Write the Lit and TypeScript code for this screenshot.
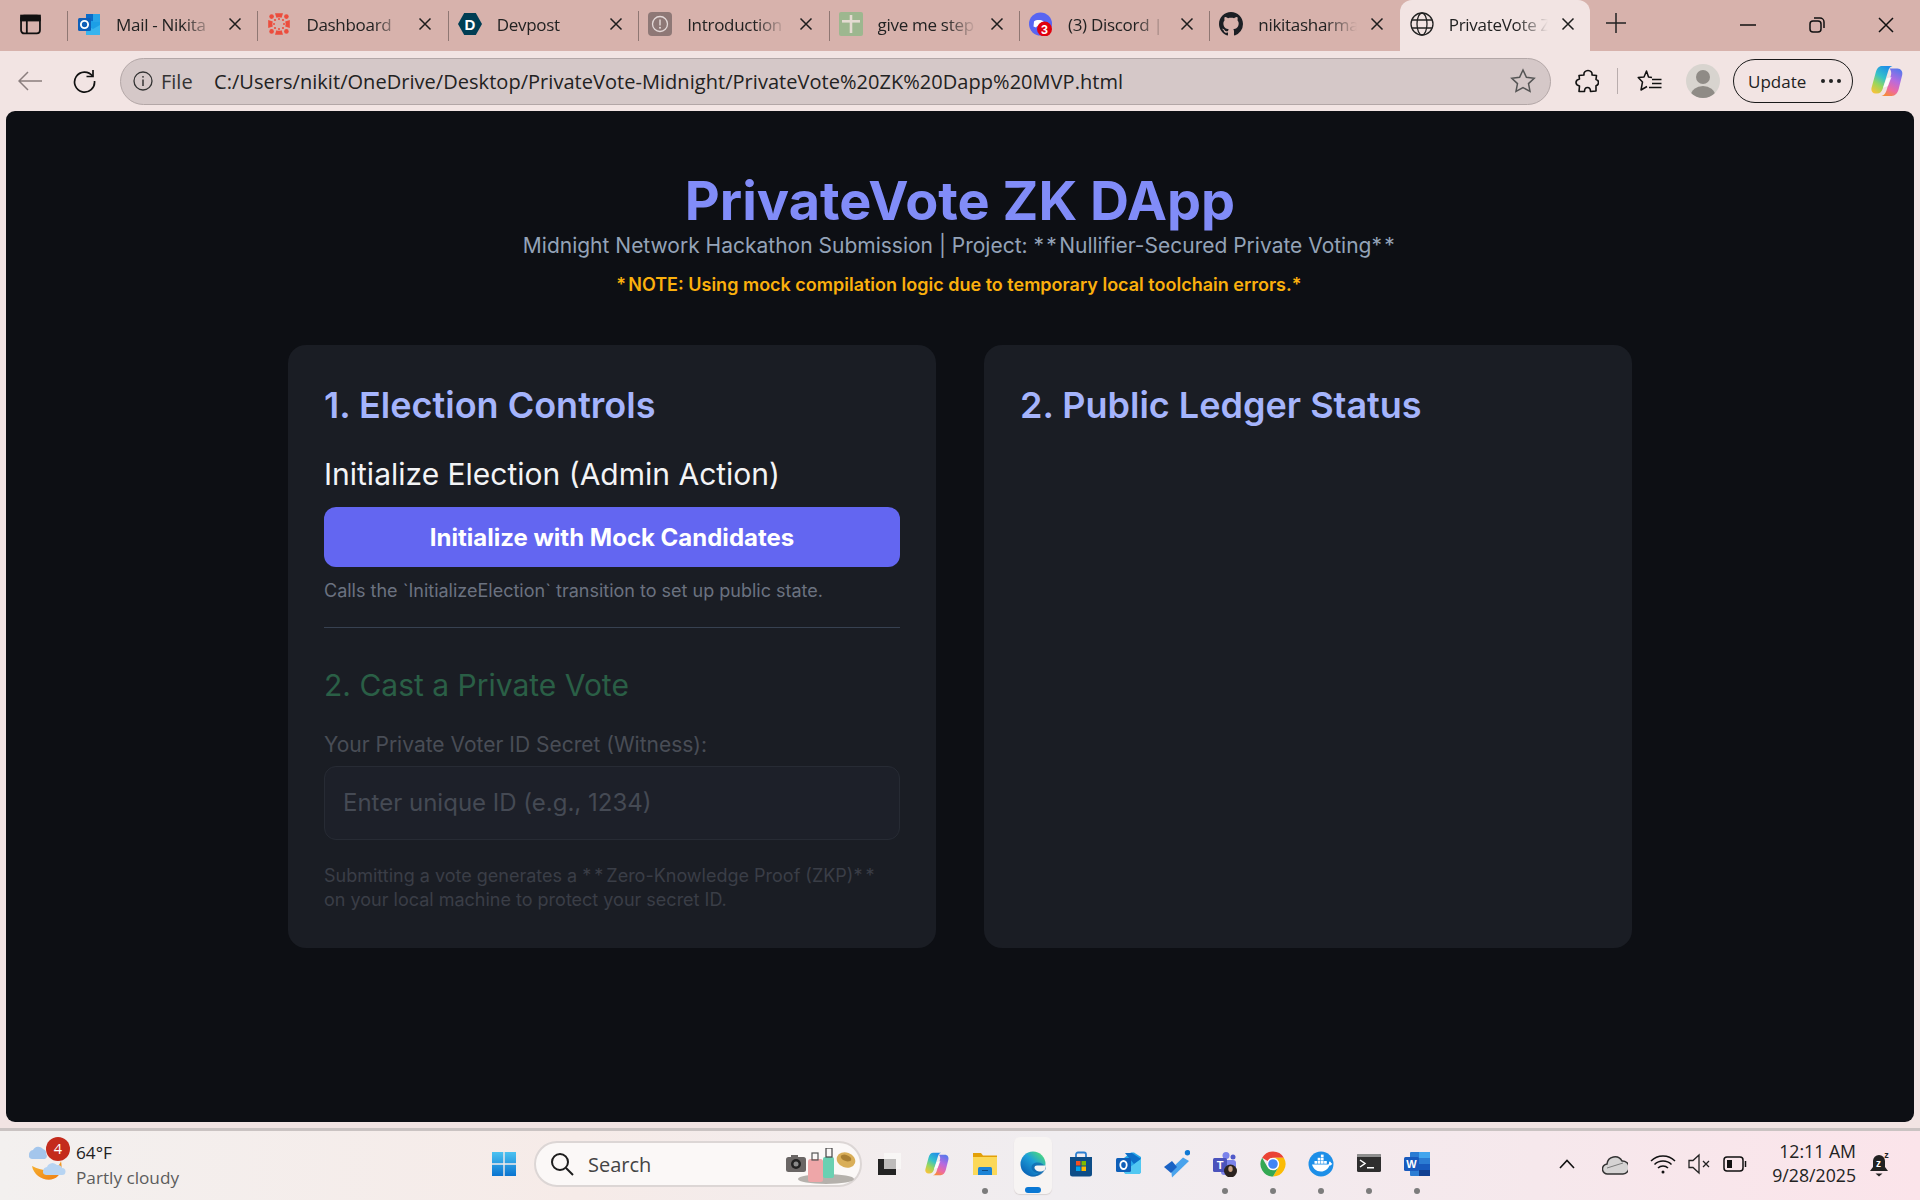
import { LitElement, html, css, svg } from "lit";
import { customElement } from "lit/decorators.js";

const ic = {
  outlook: svg`<svg viewBox="0 0 24 24" width="24" height="24"><rect x="9" y="2" width="14" height="8" fill="#0a6cc9"/><rect x="9" y="9" width="14" height="13" fill="#1c9fe6"/><path d="M9 13l7 4 7-4v10H9z" fill="#37b4ee"/><rect x="16" y="2" width="7" height="8" fill="#27a4e8"/><rect x="1" y="6" width="13" height="13" rx="1.5" fill="#0f5fb8"/><circle cx="7.5" cy="12.5" r="3.6" fill="none" stroke="#fff" stroke-width="1.9"/></svg>`,
  canvas: svg`<svg viewBox="0 0 24 24" width="24" height="24"><g fill="#ec4d3d"><path d="M8 1.2h8l-1.4 4.6a7 7 0 0 0-5.2 0z"/><path d="M8 22.8h8l-1.4-4.6a7 7 0 0 1-5.2 0z"/><path d="M1.2 8v8l4.6-1.4a7 7 0 0 1 0-5.2z"/><path d="M22.8 8v8l-4.6-1.4a7 7 0 0 0 0-5.2z"/><circle cx="4.6" cy="4.6" r="2.3"/><circle cx="19.4" cy="4.6" r="2.3"/><circle cx="4.6" cy="19.4" r="2.3"/><circle cx="19.4" cy="19.4" r="2.3"/><circle cx="8" cy="8" r="1.1"/><circle cx="16" cy="8" r="1.1"/><circle cx="8" cy="16" r="1.1"/><circle cx="16" cy="16" r="1.1"/><circle cx="12" cy="7" r="1"/><circle cx="12" cy="17" r="1"/><circle cx="7" cy="12" r="1"/><circle cx="17" cy="12" r="1"/></g></svg>`,
  devpost: svg`<svg viewBox="0 0 24 24" width="24" height="24"><path d="M6.2 1h11.6L24 12l-6.2 11H6.2L0 12z" fill="#003e54"/><text x="12" y="17.5" text-anchor="middle" font-family="Liberation Sans" font-weight="700" font-size="15" fill="#fff">D</text></svg>`,
  intro: svg`<svg viewBox="0 0 24 24" width="24" height="24"><rect width="24" height="24" rx="4" fill="#8e7876"/><circle cx="12" cy="12" r="7.5" fill="none" stroke="#e4d9d8" stroke-width="1.3"/><rect x="11.3" y="7.5" width="1.4" height="6" fill="#e4d9d8"/><circle cx="12" cy="15.7" r="1" fill="#e4d9d8"/></svg>`,
  sheet: svg`<svg viewBox="0 0 24 24" width="24" height="24"><rect width="24" height="24" rx="2" fill="#9db78f"/><rect x="10.7" y="3" width="2.6" height="18" fill="#e5dbd2"/><rect x="3" y="8" width="18" height="2.6" fill="#e5dbd2"/></svg>`,
  discord: svg`<svg viewBox="0 0 24 24" width="24" height="24"><circle cx="11.5" cy="12" r="11.5" fill="#5865f2"/><path d="M5 9.5c2-1.7 7-2 9.5 0 1 1.6 1.5 3.4 1.5 5l-2.500 1-1-1.300h-4.500l-1 1.300-2.500-1c0-1.600.5-3.400.5-5z" fill="#fff"/><circle cx="15.500" cy="17" r="7.500" fill="#e0000f"/><text x="15.500" y="21.500" text-anchor="middle" font-family="Liberation Sans" font-weight="700" font-size="12.500" fill="#fff">3</text></svg>`,
  github: svg`<svg viewBox="0 0 16 16" width="24" height="24"><path fill="#1b1f24" d="M8 0C3.580 0 0 3.580 0 8c0 3.540 2.290 6.530 5.470 7.590.4.070.55-.17.55-.38 0-.19-.01-.82-.01-1.490-2.010.37-2.530-.49-2.690-.94-.09-.23-.48-.94-.82-1.130-.28-.15-.68-.52-.01-.53.63-.01 1.080.58 1.230.82.72 1.210 1.870.87 2.330.66.070-.52.28-.87.51-1.070-1.780-.2-3.640-.89-3.640-3.950 0-.87.31-1.590.82-2.150-.08-.2-.36-1.020.08-2.120 0 0 .67-.21 2.200.82.64-.18 1.320-.27 2-.27s1.360.09 2 .27c1.530-1.040 2.200-.82 2.200-.82.44 1.100.16 1.920.08 2.120.51.56.82 1.270.82 2.150 0 3.070-1.870 3.750-3.650 3.950.29.25.54.73.54 1.480 0 1.070-.01 1.930-.01 2.200 0 .21.15.46.55.38A8.013 8.013 0 0 0 16 8c0-4.420-3.580-8-8-8z"/></svg>`,
  globe: svg`<svg viewBox="0 0 24 24" width="24" height="24" fill="none" stroke="#222" stroke-width="1.300"><circle cx="12" cy="12" r="11"/><ellipse cx="12" cy="12" rx="5" ry="11"/><path d="M1.800 8h20.400M1.800 16h20.400"/></svg>`,
};

const tabs = [
  { t: "Mail - Nikita", i: ic.outlook },
  { t: "Dashboard", i: ic.canvas },
  { t: "Devpost", i: ic.devpost },
  { t: "Introduction", i: ic.intro },
  { t: "give me step", i: ic.sheet },
  { t: "(3) Discord |", i: ic.discord },
  { t: "nikitasharma", i: ic.github },
];

const close = svg`<svg class="x" viewBox="0 0 14 14" width="14" height="14"><path d="M1.500 1.500l11 11M12.500 1.500l-11 11" stroke="#1d1d1d" stroke-width="1.500" fill="none"/></svg>`;

const copilot = (w: number, h: number) => svg`<svg class="copi" viewBox="0 0 32 32" width=${w} height=${h}><defs>
  <linearGradient id="cpa" x1=".7" y1="0" x2=".2" y2="1"><stop offset="0" stop-color="#1f8fe8"/><stop offset=".4" stop-color="#35c2c9"/><stop offset=".7" stop-color="#9bd65a"/><stop offset="1" stop-color="#f6c33a"/></linearGradient>
  <linearGradient id="cpb" x1=".7" y1="0" x2=".3" y2="1"><stop offset="0" stop-color="#5a78ec"/><stop offset=".4" stop-color="#b56be0"/><stop offset=".75" stop-color="#ee6aa0"/><stop offset="1" stop-color="#f58a3c"/></linearGradient></defs>
  <path d="M11 1h10.500c-2.500.5-3.500 2.500-4.300 5l-5.400 17.500c-.9 3-2.800 5-5.800 5H4.500c-3 0-4.800-2.500-3.900-6l4-14.500C5.700 3.500 8 1 11 1z" fill="url(#cpa)"/>
  <path d="M21 3.500h5.500c3.500 0 5.500 3 4.700 6.500l-3.500 14c-1 4-3.500 7-7 7H10.500c2.700-.8 4.200-3 5-5.500L20 10c.6-2.500 0-5-1.500-6.500z" fill="url(#cpb)"/>
  <path d="M15.500 13.500l5-1.500-3.500 9-5 1.800z" fill="#fff" opacity=".85"/></svg>`;

const apps = [
  copilot(24, 24),
  svg`<svg viewBox="0 0 24 22" width="24" height="22"><path d="M0 0h8l2 2.500h14V22H0z" fill="#e3a008"/><rect x="0" y="4" width="24" height="18" fill="#fbd858"/><path d="M5 15.500a1.500 1.500 0 0 1 1.500-1.500h11a1.500 1.500 0 0 1 1.500 1.500V22H5z" fill="#1b83d6"/><rect x="9" y="17" width="6" height="1" fill="#0d4d87"/></svg>`,
  svg`<svg viewBox="0 0 26 26" width="26" height="26"><defs><linearGradient id="ed" x1=".9" y1=".1" x2=".2" y2=".9"><stop offset="0" stop-color="#4fdb7a"/><stop offset=".45" stop-color="#1ea0d8"/><stop offset="1" stop-color="#0b66b8"/></linearGradient></defs><circle cx="13" cy="13" r="12.500" fill="url(#ed)"/><path d="M25 18.500C23 23 18.500 25.500 13 25.500c-2 0-3-.3-4-1 3 .5 8.500-.5 9.500-2.500-3 0-7-2-7-5.500s3-5 6-5c3.500 0 6.500 2 8 4.500l.3 2.500z" fill="#0e5fa8" opacity=".65"/><path d="M25.500 14.500H17c-1.600 0-2.500.9-2.500 2 0 2.500 3 4 5.500 4 2 0 3.500-.5 5-2z" fill="#f7f4f3"/></svg>`,
  svg`<svg viewBox="0 0 26 26" width="26" height="26"><path d="M8 6V3.500a2 2 0 0 1 2-2h6a2 2 0 0 1 2 2V6" fill="none" stroke="#2c7fd0" stroke-width="1.800"/><path d="M2 6h22v17a2.500 2.500 0 0 1-2.500 2.500h-17A2.500 2.500 0 0 1 2 23z" fill="#0d4d87"/><rect x="8" y="10" width="4.500" height="4.500" fill="#f25022"/><rect x="13.500" y="10" width="4.500" height="4.500" fill="#7fba00"/><rect x="8" y="15.500" width="4.500" height="4.500" fill="#00a4ef"/><rect x="13.500" y="15.500" width="4.500" height="4.500" fill="#ffb900"/></svg>`,
  svg`<svg viewBox="0 0 26 24" width="26" height="24"><path d="M8 6l7-5.500h3L25 5v14a3 3 0 0 1-3 3H11a3 3 0 0 1-3-3z" fill="#27a9ea"/><path d="M9 1h7l9 6-7 5z" fill="#0c6fc8"/><path d="M8 19l9-6 8-6v12a3 3 0 0 1-3 3H11a3 3 0 0 1-3-3z" fill="#52c8f2"/><rect x="0" y="6" width="15" height="14" rx="1.500" fill="#0f5fb8"/><ellipse cx="7.500" cy="13" rx="3.200" ry="4" fill="none" stroke="#fff" stroke-width="1.800"/></svg>`,
  svg`<svg viewBox="0 0 26 28" width="26" height="28"><circle cx="23.500" cy="2.700" r="2.700" fill="#0f78d4"/><path d="M8 27.500L25 11l-6-3.500L7 19z" fill="#4aa3ec"/><path d="M0 17l8-6 5 6-6 6z" fill="#1a62c4"/></svg>`,
  svg`<svg viewBox="0 0 26 26" width="26" height="26"><circle cx="14" cy="4.500" r="3.500" fill="#7b83eb"/><circle cx="21" cy="6" r="2.500" fill="#5059c9"/><rect x="9" y="9" width="15" height="15" rx="3" fill="#7b83eb"/><rect x="1" y="7" width="14" height="14" rx="1.500" fill="#4b53bc"/><text x="8" y="18" text-anchor="middle" font-family="Liberation Sans" font-weight="700" font-size="11" fill="#fff">T</text><circle cx="18.500" cy="20" r="6.500" fill="#2b2320"/><ellipse cx="18.500" cy="18" rx="2.200" ry="3" fill="#c9a184"/></svg>`,
  svg`<svg viewBox="0 0 26 26" width="26" height="26"><path d="M2.170 6.750A12.500 12.500 0 0 1 23.830 6.750H13A6.250 6.250 0 0 0 7.590 9.875z" fill="#ea4335"/><path d="M23.830 6.750A12.500 12.500 0 0 1 13 25.500L18.410 16.125A6.250 6.250 0 0 0 13 6.750z" fill="#fbbc05"/><path d="M13 25.500A12.500 12.500 0 0 1 2.170 6.750L7.590 16.125A6.250 6.250 0 0 0 18.410 16.125z" fill="#34a853"/><circle cx="13" cy="13" r="6" fill="#fff"/><circle cx="13" cy="13" r="4.800" fill="#4285f4"/></svg>`,
  svg`<svg viewBox="0 0 26 26" width="26" height="26"><circle cx="13" cy="13" r="12.500" fill="#1d8fe8"/><path d="M4 13.500h15.500c.8 0 1.500-.5 1.500-1.500 0-1 .3-1.500 1-1.500.6.500 1 1 1.200 1.700.5 0 1 .2 1 .3-.5 1.500-1.500 2-2.700 2-1.500 3.500-4.500 6-8.500 6-5 0-7.700-3-9-7z" fill="#fff"/><g fill="#fff"><rect x="6.500" y="10" width="2.700" height="2.700"/><rect x="9.700" y="10" width="2.700" height="2.700"/><rect x="12.900" y="10" width="2.700" height="2.700"/><rect x="16.100" y="10" width="2.700" height="2.700"/><rect x="9.700" y="6.800" width="2.700" height="2.700"/><rect x="12.900" y="6.800" width="2.700" height="2.700"/><rect x="12.900" y="3.600" width="2.700" height="2.700"/></g></svg>`,
  svg`<svg viewBox="0 0 24 20" width="24" height="20"><rect x="0" y="0" width="24" height="18" rx="1.500" fill="#2e2e2e"/><path d="M1.500 0h21A1.500 1.500 0 0 1 24 1.500V3H0V1.500A1.500 1.500 0 0 1 1.500 0z" fill="#8f8f8f"/><path d="M3 6l5 3.500L3 13" fill="none" stroke="#fff" stroke-width="1.500"/><rect x="10" y="13" width="7" height="1.500" fill="#fff"/></svg>`,
  svg`<svg viewBox="0 0 26 24" width="26" height="24"><rect x="6" y="0" width="20" height="24" rx="1" fill="#2b7cd3"/><rect x="15" y="0" width="11" height="6" fill="#41a5ee"/><rect x="15" y="12" width="11" height="6" fill="#185abd"/><rect x="15" y="18" width="11" height="6" fill="#103f91"/><rect x="0" y="5" width="15" height="14" rx="1.500" fill="#185abd"/><text x="7.500" y="16" text-anchor="middle" font-family="Liberation Sans" font-weight="700" font-size="11" fill="#fff">W</text></svg>`,
];
const dots = [false, true, false, false, false, false, true, true, true, true, true];

@customElement("app-root")
export class AppRoot extends LitElement {
  static styles = css`
    :host { display: block; width: 1920px; height: 1200px; overflow: hidden; font-family: "Open Sans", "Noto Sans", sans-serif; background: #f2e4e3; }
    .root { display: flex; flex-direction: column; height: 1200px; }
    .tabbar { display: flex; height: 51px; background: #d7b2ac; align-items: stretch; flex: none; }
    .side { width: 67px; display: flex; align-items: center; padding: 0 0 3px 20px; box-sizing: border-box; }
    .tab { width: 190.4px; box-sizing: border-box; display: flex; align-items: center; padding: 0 0 3px 10px; position: relative; font-size: 17px; color: #222; }
    .tab::before { content: ""; position: absolute; left: 0; top: 11px; height: 30px; width: 1px; background: #8f7773; }
    .tab.active { background: #f2e4e3; width: 190px; border-radius: 12px 12px 0 0; }
    .tab.active::before { display: none; }
    .fav { width: 24px; height: 24px; flex: none; display: block; }
    .ttl { width: 102px; margin-left: 15px; white-space: nowrap; letter-spacing: -0.3px; overflow: hidden; flex: none; -webkit-mask-image: linear-gradient(to right, #000 66%, transparent 97%); mask-image: linear-gradient(to right, #000 66%, transparent 97%); }
    .x { margin-left: 10px; flex: none; }
    .plus { margin: 0 0 5px 15px; align-self: center; display: block; }
    .win { margin-left: auto; display: flex; align-items: center; padding-bottom: 1px; }
    .wc { width: 69px; display: flex; justify-content: center; }
    .toolbar { height: 60px; flex: none; display: flex; align-items: center; background: #f2e4e3; }
    .tb-back { width: 60px; display: flex; justify-content: center; }
    .tb-reload { width: 60px; display: flex; justify-content: center; margin-left: -6px; }
    .addr { width: 1431px; height: 47px; box-sizing: border-box; margin-left: 6px; border: 1.500px solid #b3a7a7; border-radius: 24px; background: #d5c8c8; display: flex; align-items: center; padding-left: 12px; font-size: 20px; color: #222; }
    .file { margin-left: 8px; width: 51px; color: #333; }
    .url { margin-left: 2px; flex: 1; white-space: nowrap; letter-spacing: 0.04px; }
    .star { margin-right: 14px; display: block; }
    .tools { display: flex; align-items: center; margin-left: 6px; }
    .tcell { width: 60px; display: flex; justify-content: center; }
    .tcell.fv { padding-left: 4px; width: 56px; }
    .sep { width: 1px; height: 26px; background: #b9adad; }
    .avatar { width: 34px; height: 34px; border-radius: 50%; background: #d8d4cf; overflow: hidden; display: block; margin: 0 13px 0 8px; }
    .update { width: 120px; height: 44px; box-sizing: border-box; border: 1.500px solid #1a1a1a; border-radius: 22px; display: flex; align-items: center; padding-left: 14px; font-size: 17px; color: #222; gap: 15px; }
    .more { display: flex; gap: 4px; }
    .more i { width: 4px; height: 4px; border-radius: 50%; background: #222; display: block; }
    .cop { margin-left: 18px; display: flex; }

    .page { flex: none; height: 1011px; margin: 0 6px; background: #0d0f14; border-radius: 9px; box-sizing: border-box; padding-top: 59px; display: flex; flex-direction: column; align-items: center; font-family: Inter, sans-serif; }
    h1 { margin: 0; font-size: 54px; line-height: 61px; font-weight: 700; color: #818cf8; }
    .sub { font-size: 21px; line-height: 30px; color: #94a3b8; }
    .ast { letter-spacing: 2.300px; }
    .note { margin-top: 12px; font-size: 18px; line-height: 24px; font-weight: 600; color: #fbb00d; }
    .cards { margin-top: 48px; display: grid; grid-template-columns: 648px 648px; gap: 48px; }
    .card { background: #1a1d24; border-radius: 18px; padding: 36px; height: 531px; box-sizing: content-box; }
    h2 { margin: 0; font-size: 36px; line-height: 48px; font-weight: 600; color: #a5b4fc; }
    h3 { margin: 27px 0 0; font-size: 30px; line-height: 36px; font-weight: 400; color: #f3f4f6; }
    button { display: block; width: 100%; height: 60px; margin-top: 15px; border: 0; border-radius: 12px; background: #6366f1; color: #fff; font: 700 24px Inter, sans-serif; }
    .help { margin-top: 12px; font-size: 18px; line-height: 24px; color: #6b7280; }
    hr { margin: 24px 0 0; border: 0; height: 1px; background: #374151; }
    h3.cast { margin-top: 39px; color: #2a5f46; }
    label { display: block; margin-top: 29px; font-size: 21px; line-height: 26px; color: #494d56; }
    input { display: block; width: 100%; height: 74px; box-sizing: border-box; margin-top: 8px; border: 1px solid #272b34; border-radius: 12px; background: #1d2029; padding: 0 18px 2px; font: 400 24px Inter, sans-serif; color: #454a54; }
    input::placeholder { color: #454a54; opacity: 1; }
    .priv { margin-top: 24px; font-size: 18px; line-height: 24px; color: #3a3e47; }
    .priv .ast { letter-spacing: 3px; }

    .taskbar { flex: none; margin-top: 6px; height: 72px; box-sizing: border-box; border-top: 3px solid #cac3c2; display: flex; align-items: center; background: linear-gradient(90deg, #f3f0ef 0%, #f6ebe8 30%, #f0edf0 55%, #f6e8ec 80%, #fbe4ea 100%); color: #222; font-family: "Open Sans", "Noto Sans", sans-serif; }
    .weather { width: 480px; flex: none; box-sizing: border-box; padding-left: 28px; display: flex; align-items: center; }
    .wicon { position: relative; width: 48px; height: 52px; flex: none; }
    .wicon svg { display: block; }
    .badge { position: absolute; left: 18px; top: -3px; width: 24px; height: 24px; border-radius: 50%; background: #c42b1c; color: #fff; font-size: 14.500px; line-height: 24px; text-align: center; }
    .wtext { font-size: 17.200px; line-height: 25px; margin-top: -2px; }
    .wtext div:last-child { color: #5c5c5c; }
    .cell { width: 48px; height: 57px; flex: none; display: flex; align-items: center; justify-content: center; position: relative; padding-bottom: 3px; box-sizing: border-box; }
    .cell.on { background: #f7f4f3; border-radius: 6px; box-shadow: 0 1px 1px #d8d2d2; width: 38px; margin: 0 5px; }
    .dot { position: absolute; left: 21px; bottom: 0; width: 6px; height: 6px; border-radius: 50%; background: #7c7c7c; }
    .bar { position: absolute; left: 11px; bottom: 1px; width: 16px; height: 6px; border-radius: 3px; background: #0a78d4; }
    .search { width: 328px; height: 46px; box-sizing: border-box; flex: none; margin: 0 3px 3px 6px; border-radius: 23px; border: 2px solid #dcd6d5; background: #fbf8f7; display: flex; align-items: center; padding-left: 14px; font-size: 20px; color: #444; position: relative; }
    .search span { margin-left: 14px; }
    .deco { position: absolute; right: 4px; top: 5px; display: block; }
    .tray { margin-left: 108px; display: flex; align-items: center; padding-bottom: 3px; }
    .tc { width: 36px; display: flex; justify-content: center; }
    .tc.wide { width: 60px; }
    .clock { width: 103px; text-align: right; font-size: 17.700px; line-height: 24.500px; color: #222; padding-bottom: 2px; }
    .bell { margin-left: 12px; display: block; }
  `;

  render() {
    const ast = html`<span class="ast">**</span>`;
    return html`<div class="root">
      <div class="tabbar">
        <div class="side"><svg viewBox="0 0 20 20" width="21" height="21" fill="none" stroke="#111" stroke-width="1.700"><rect x="1" y="1.500" width="18" height="17" rx="3"/><path d="M1 6h18M6.500 6v12" /><rect x="1" y="1.500" width="18" height="4.500" fill="#111"/></svg></div>
        ${tabs.map((t) => html`<div class="tab"><div class="fav">${t.i}</div><div class="ttl">${t.t}</div>${close}</div>`)}
        <div class="tab active"><div class="fav">${ic.globe}</div><div class="ttl">PrivateVote Z</div>${close}</div>
        <svg class="plus" viewBox="0 0 22 22" width="22" height="22"><path d="M11 1v20M1 11h20" stroke="#222" stroke-width="1.500"/></svg>
        <div class="win">
          <div class="wc"><svg viewBox="0 0 16 16" width="16" height="16"><path d="M0 8h16" stroke="#111" stroke-width="1.500"/></svg></div>
          <div class="wc"><svg viewBox="0 0 16 16" width="16" height="16" fill="none" stroke="#111" stroke-width="1.500"><rect x="1" y="4" width="11" height="11" rx="3"/><path d="M5 1h6a4 4 0 0 1 4 4v6"/></svg></div>
          <div class="wc"><svg viewBox="0 0 16 16" width="16" height="16"><path d="M1 1l14 14M15 1L1 15" stroke="#111" stroke-width="1.500"/></svg></div>
        </div>
      </div>
      <div class="toolbar">
        <div class="tb-back"><svg viewBox="0 0 24 20" width="24" height="20" fill="none" stroke="#8a7e7e" stroke-width="1.500"><path d="M24 10H1M10 1l-9 9 9 9"/></svg></div>
        <div class="tb-reload"><svg viewBox="0 0 24 24" width="24" height="24" fill="none" stroke="#111" stroke-width="1.700"><path d="M20.500 7A10 10 0 1 0 22.500 12"/><path d="M21 1v6.500h-6.500"/></svg></div>
        <div class="addr">
          <svg viewBox="0 0 20 20" width="20" height="20" fill="none" stroke="#333" stroke-width="1.300"><circle cx="10" cy="10" r="9"/><path d="M10 8.500V15" stroke-width="1.500"/><circle cx="10" cy="5.800" r=".9" fill="#333" stroke="none"/></svg>
          <span class="file">File</span>
          <span class="url">C:/Users/nikit/OneDrive/Desktop/PrivateVote-Midnight/PrivateVote%20ZK%20Dapp%20MVP.html</span>
          <svg class="star" viewBox="0 0 26 26" width="26" height="26" fill="none" stroke="#555" stroke-width="1.500"><path d="M13 2l3.400 7.200 7.800 1-5.700 5.400 1.500 7.800L13 19.600l-7 3.800 1.500-7.800-5.700-5.400 7.800-1z"/></svg>
        </div>
        <div class="tools">
          <div class="tcell"><svg viewBox="0 0 24 24" width="24" height="24" fill="none" stroke="#111" stroke-width="1.600" stroke-linejoin="round"><path d="M9 6C8.500 3.500 10.500 1.500 13 1.500S17.500 3.500 17 6L21.500 6.500 21 10.500C23 11 23.500 12.500 23.500 13.500 23.500 15.500 22 16.500 21 16.800L21 22 15.500 22.500C15.500 20 14 18.500 12.500 18.500 10.500 18.500 9.500 20 9.500 22.500L4 22.500 4.500 17C2.500 16.500 1 15 1 13.500 1 12 2.500 10.500 4.500 10L4 6.500z"/></svg></div>
          <div class="sep"></div>
          <div class="tcell fv"><svg viewBox="0 0 26 24" width="26" height="24" fill="none" stroke="#111" stroke-width="1.500" stroke-linejoin="round"><path d="M15 8.500L11.500 8 9.500 2 7 8 1.200 8.500 5.500 13 4 21 10 17.500"/><path d="M15 10.500h9.500M15 14.500h9.500M12 18.500h12.500"/></svg></div>
          <svg class="avatar" viewBox="0 0 34 34"><circle cx="17" cy="13" r="7" fill="#8f8b86"/><ellipse cx="17" cy="31" rx="12" ry="9" fill="#8f8b86"/></svg>
          <div class="update"><span>Update</span><span class="more"><i></i><i></i><i></i></span></div>
          <div class="cop">${copilot(32, 32)}</div>
        </div>
      </div>

      <main class="page">
        <h1>PrivateVote ZK DApp</h1>
        <div class="sub">Midnight Network Hackathon Submission | Project: ${ast}Nullifier-Secured Private Voting${ast}</div>
        <div class="note"><span class="ast">*</span>NOTE: Using mock compilation logic due to temporary local toolchain errors.<span class="ast">*</span></div>
        <div class="cards">
          <section class="card">
            <h2>1. Election Controls</h2>
            <h3>Initialize Election (Admin Action)</h3>
            <button>Initialize with Mock Candidates</button>
            <div class="help">Calls the \`InitializeElection\` transition to set up public state.</div>
            <hr />
            <h3 class="cast">2. Cast a Private Vote</h3>
            <label>Your Private Voter ID Secret (Witness):</label>
            <input disabled placeholder="Enter unique ID (e.g., 1234)" />
            <div class="priv">Submitting a vote generates a ${ast}Zero-Knowledge Proof (ZKP)${ast}<br />on your local machine to protect your secret ID.</div>
          </section>
          <section class="card"><h2>2. Public Ledger Status</h2></section>
        </div>
      </main>

      <div class="taskbar">
        <div class="weather">
          <div class="wicon">
            <svg viewBox="0 0 48 52" width="48" height="52"><defs><linearGradient id="mo" x1="0" y1="0" x2="1" y2="1"><stop offset="0" stop-color="#f7b733"/><stop offset="1" stop-color="#ee7d11"/></linearGradient></defs><path d="M4 26C6 38 22 44 30 36 34 32 34 26 33 21 30 30 20 34 4 26z" fill="url(#mo)"/><path d="M1 15a4.500 4.500 0 0 1 4-5 6 6 0 0 1 10-1 4 4 0 0 1 3 5 3 3 0 0 1-1 5H4a3.500 3.500 0 0 1-3-4z" fill="#a4c6ec"/><path d="M15 31a4.500 4.500 0 0 1 4-4 6 6 0 0 1 10-2 4.500 4.500 0 0 1 5 3 3.500 3.500 0 0 1 0 7H18a3.500 3.500 0 0 1-3-4z" fill="#b7d4f2"/></svg>
            <div class="badge">4</div>
          </div>
          <div class="wtext"><div>64°F</div><div>Partly cloudy</div></div>
        </div>
        <div class="cell"><svg viewBox="0 0 24 24" width="24" height="24"><defs><linearGradient id="w" x1="0" y1="0" x2="0" y2="1"><stop offset="0" stop-color="#4cc2f1"/><stop offset="1" stop-color="#0a74d0"/></linearGradient></defs><path d="M0 0h11.300v11.300H0zM12.700 0H24v11.300H12.700zM0 12.700h11.300V24H0zM12.700 12.700H24V24H12.700z" fill="url(#w)"/></svg></div>
        <div class="search">
          <svg viewBox="0 0 24 24" width="24" height="24" fill="none" stroke="#1c1c1c" stroke-width="2"><circle cx="10" cy="10" r="8"/><path d="M16 16l7 7"/></svg>
          <span>Search</span>
          <svg class="deco" viewBox="0 0 70 37" width="70" height="37"><ellipse cx="40" cy="31" rx="28" ry="5" fill="#b5b1ac"/><rect x="0" y="9" width="20" height="15" rx="2.500" fill="#6a6665"/><rect x="5" y="7" width="7" height="3" fill="#6a6665"/><circle cx="10" cy="16" r="5" fill="#222"/><circle cx="10" cy="16" r="2.500" fill="#8a8a8a"/><rect x="22" y="11" width="15" height="23" rx="2.500" fill="#eea6a8"/><rect x="26" y="5" width="6" height="7" fill="none" stroke="#555" stroke-width="1.200"/><rect x="37" y="9" width="11" height="21" rx="2" fill="#6ad0b2"/><rect x="40" y="0" width="6" height="9" fill="none" stroke="#444" stroke-width="1.200"/><ellipse cx="60" cy="12" rx="9.500" ry="7.500" fill="#d9ae58" transform="rotate(20 60 12)"/><ellipse cx="60" cy="10" rx="5.500" ry="3" fill="#a97f33" transform="rotate(20 60 10)"/></svg>
        </div>
        <div class="cell"><svg viewBox="0 0 23 22" width="23" height="22"><rect x="0" y="6" width="18" height="16" fill="#232323"/><rect x="6" y="0" width="17" height="16" fill="#f8f6f5"/><rect x="6" y="6" width="12" height="10" fill="#bdbbba"/></svg></div>
        ${apps.map((a, i) => html`<div class="cell ${i === 2 ? "on" : ""}">${a}${dots[i] ? html`<i class="dot"></i>` : ""}${i === 2 ? html`<i class="bar"></i>` : ""}</div>`)}
        <div class="tray">
          <div class="tc"><svg viewBox="0 0 16 10" width="16" height="10" fill="none" stroke="#111" stroke-width="1.600"><path d="M1 9l7-7.500L15 9"/></svg></div>
          <div class="tc wide"><svg viewBox="0 0 26 24" width="26" height="24" fill="#d5d3d3" stroke="#333" stroke-width="1.500"><path d="M6 22a5 5 0 0 1-1-10 8 8 0 0 1 15-3 6.500 6.500 0 0 1 1 13z"/><path d="M5 16l16-5" fill="none" stroke="#666" stroke-width=".8"/></svg></div>
          <div class="tc"><svg viewBox="0 0 26 22" width="26" height="22" fill="none" stroke="#111" stroke-width="1.500"><path d="M1 8a17 17 0 0 1 24 0M4.500 11.500a12 12 0 0 1 17 0M8 15a7 7 0 0 1 10 0"/><circle cx="13" cy="19" r="1.500" fill="#111" stroke="none"/></svg></div>
          <div class="tc"><svg viewBox="0 0 24 24" width="24" height="24" fill="none" stroke="#222" stroke-width="1.300"><path d="M2 8.500h4L12 3v18l-6-5.500H2zM16 9l6 6M22 9l-6 6"/></svg></div>
          <div class="tc"><svg viewBox="0 0 24 16" width="24" height="16" fill="none" stroke="#111" stroke-width="1.500"><rect x="1" y="1" width="19" height="14" rx="3"/><rect x="4" y="4" width="5" height="8" fill="#111" stroke="none"/><path d="M22.500 5v6"/></svg></div>
          <div class="clock"><div>12:11 AM</div><div>9/28/2025</div></div>
          <svg class="bell" viewBox="0 0 22 26" width="22" height="26"><path d="M11 4a6 6 0 0 0-6 6v6l-3 4h18l-3-4v-6a6 6 0 0 0-6-6z" fill="#222"/><path d="M7.500 22.500h7l-3.500 3z" fill="#222"/><text x="10.500" y="16" text-anchor="middle" font-size="10" font-weight="700" fill="#fff" font-family="Liberation Sans">z</text><text x="18.500" y="7" text-anchor="middle" font-size="9" font-weight="700" fill="#222" font-family="Liberation Sans">z</text></svg>
        </div>
      </div>
    </div>`;
  }
}
